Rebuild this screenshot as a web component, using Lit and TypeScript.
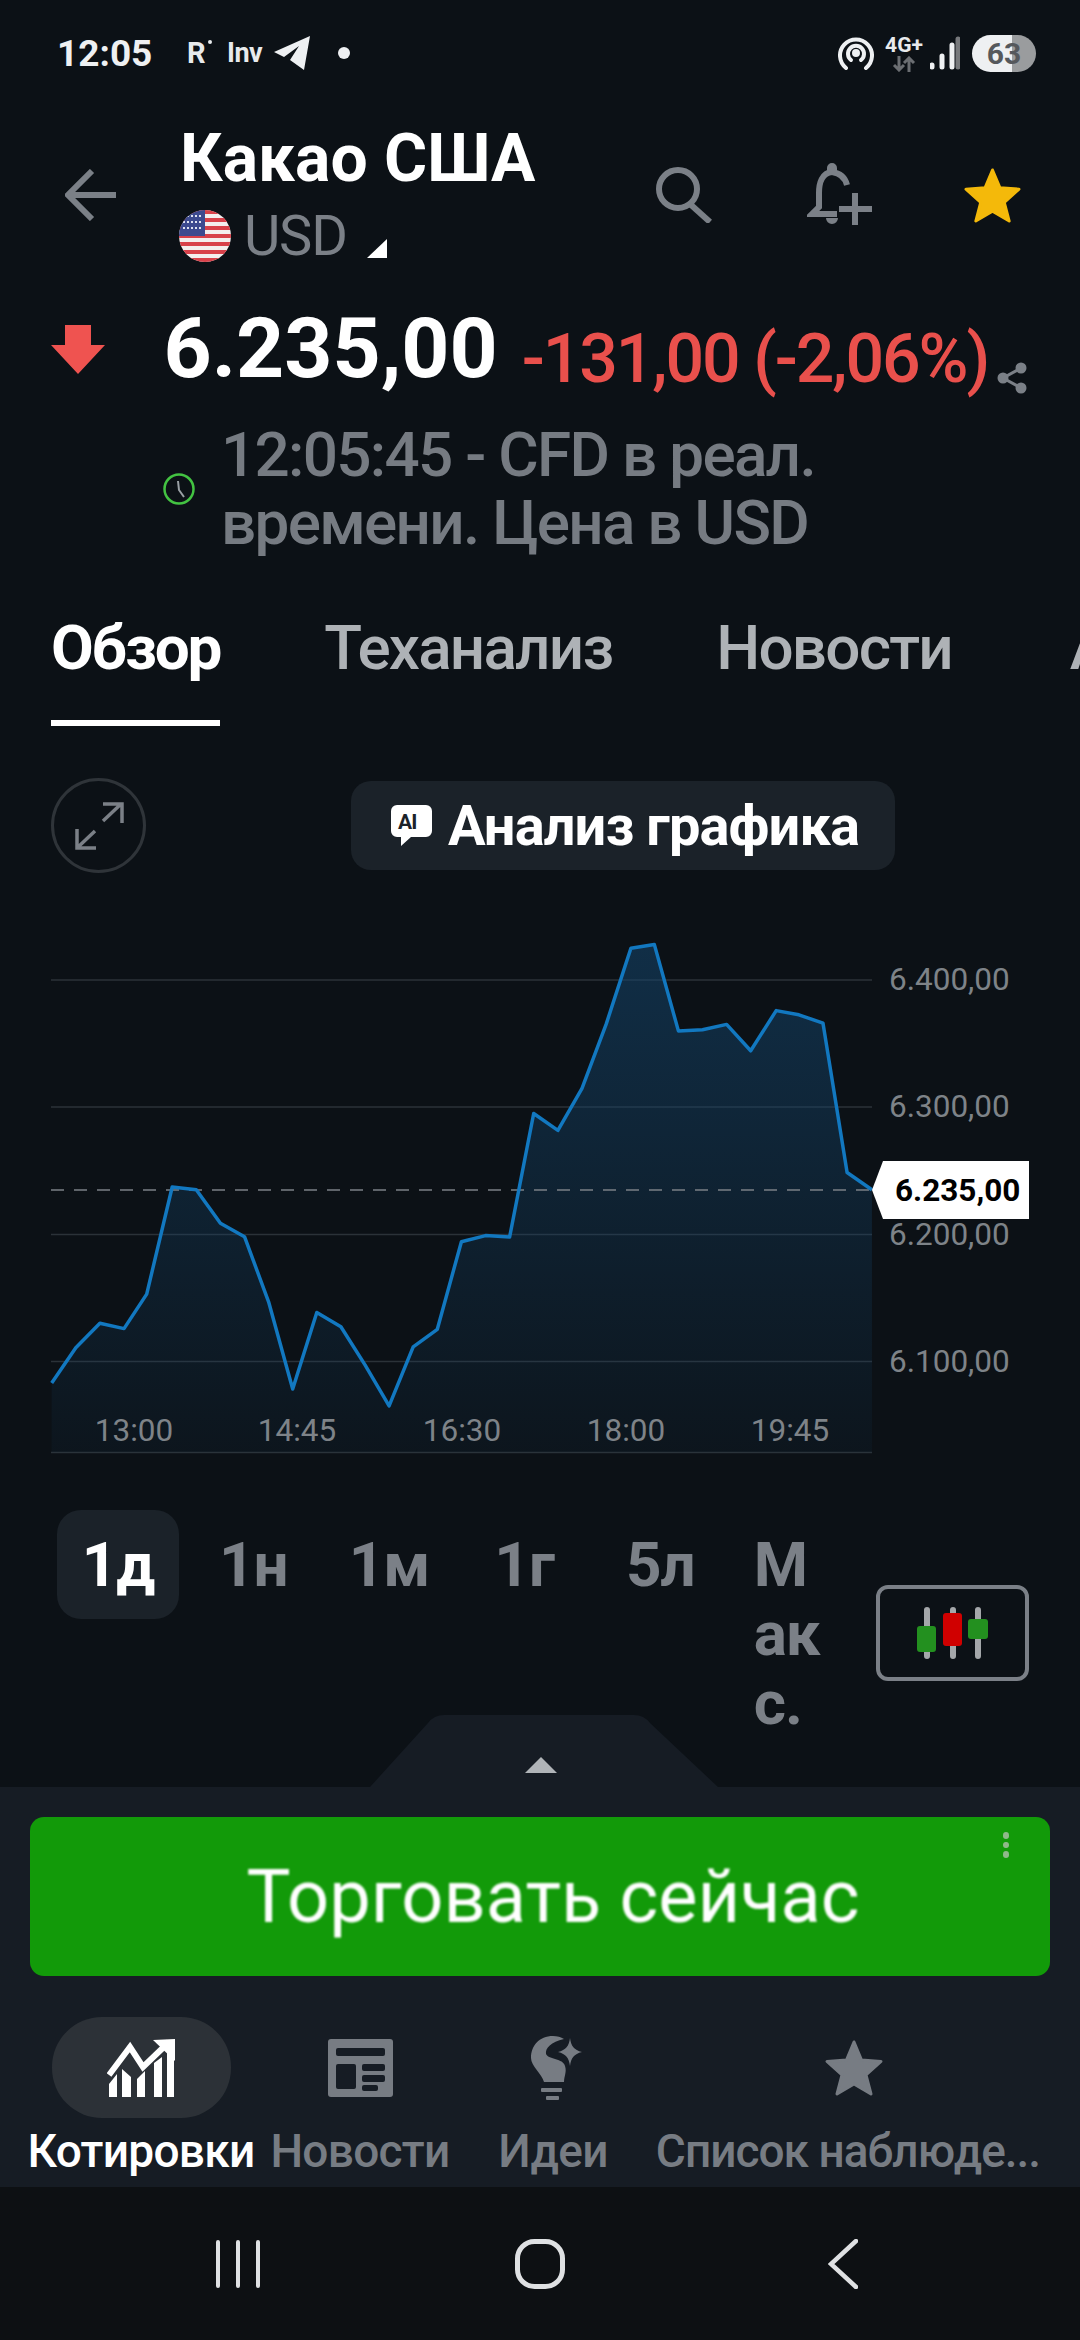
import { LitElement, html, css, svg } from "lit";
import { customElement } from "lit/decorators.js";

const RAW = [[75,1262],[110,1170],[145,1106],[180,1120],[213,1030],[250,750],[285,757],[320,845],[355,880],[390,1050],[425,1278],[460,1078],[495,1115],[530,1215],[565,1322],[600,1168],[635,1122],[670,893],[705,877],[740,881],[775,558],[810,602],[845,492],[880,325],[916,126],[950,116],[985,342],[1020,339],[1055,325],[1090,394],[1127,289],[1160,300],[1195,322],[1230,712],[1266,757]];
const PTS = RAW.map(([x, y]) => [x / 1.452, y / 2.6133 + 900]);
const LINE = PTS.map((p) => p[0].toFixed(1) + "," + p[1].toFixed(1)).join(" ");
const AREA = `51.6,1452.6 ${LINE} 872,1452.6`;
const GRID = [980, 1107, 1234.5, 1361.5, 1452.6];
const YL = [["6.400,00", 990], ["6.300,00", 1117], ["6.200,00", 1245], ["6.100,00", 1372]] as const;
const XL = [["13:00", 134], ["14:45", 297], ["16:30", 462], ["18:00", 626], ["19:45", 790]] as const;

@customElement("app-root")
export class AppRoot extends LitElement {
  static styles = css`
    :host { display: block; width: 1080px; height: 2340px; background: #0c1116; overflow: hidden; font-family: Roboto, "Noto Sans", sans-serif; color: #fff; }
    svg { display: block; flex: none; }
    .status { height: 106px; display: flex; align-items: center; padding: 0 44px 0 57px; box-sizing: border-box; }
    .time { font-size: 37px; font-weight: 700; width: 130px; color: #eef0f2; }
    .rmark { position: relative; font-size: 29px; font-weight: 700; width: 40px; color: #e8eaec; }
    .rmark::after { content: ""; position: absolute; left: 21px; top: 4px; width: 4px; height: 4px; border-radius: 50%; background: #e8eaec; }
    .inv { font-size: 27px; font-weight: 700; width: 46px; color: #e8eaec; letter-spacing: -0.5px; }
    .dot { width: 12px; height: 12px; border-radius: 50%; background: #eef0f2; margin-left: 27px; }
    .sright { margin-left: auto; display: flex; align-items: center; }
    .net { width: 42px; margin: 0 5px 0 9px; display: flex; flex-direction: column; align-items: center; font-size: 21px; font-weight: 700; line-height: 22px; color: #e8eaec; }
    .batt { width: 64px; height: 37px; margin-left: 12px; border-radius: 19px; background: linear-gradient(90deg, #eef0f2 0 63%, #9a9c9e 63% 100%); color: #55585c; font-size: 30px; font-weight: 700; text-align: center; line-height: 37px; }

    .header { display: flex; align-items: center; padding: 16px 57px 0 65px; }
    .hcol { flex: 1; margin-left: 63px; }
    .title { font-size: 66px; font-weight: 700; line-height: 74px; }
    .cur { display: flex; align-items: center; margin-top: 8px; height: 64px; font-size: 56px; line-height: 64px; color: #7b8087; margin-left: -1px; letter-spacing: -1.2px; }
    .cur span { margin-left: 13px; }
    .cur svg.tri { margin: 24px 0 0 20px; }
    .hicons1 { margin-right: 2px; }
    .hicons2 { margin-left: 93px; }
    .hicons3 { margin-left: 90px; }

    .price { display: flex; align-items: flex-start; height: 90px; margin-top: 36px; padding-left: 51px; }
    .arrow { margin-top: 21px; }
    .pval { font-size: 84px; font-weight: 700; line-height: 90px; margin-left: 58.5px; }
    .chg { font-size: 68px; font-weight: 500; line-height: 78px; color: #e9504c; margin: 16px 0 0 24px; white-space: nowrap; letter-spacing: -2.1px; }
    .share { margin: 58px 0 0 8.5px; }

    .meta { display: flex; align-items: center; margin-top: 27px; padding-left: 163px; }
    .mtext { font-size: 62px; font-weight: 500; line-height: 68px; color: #767b82; margin-left: 26px; white-space: nowrap; letter-spacing: -1.7px; }

    .tabs { display: flex; gap: 104px; margin-top: 56px; padding-left: 51px; height: 113px; white-space: nowrap; }
    .tab { font-size: 62px; font-weight: 500; line-height: 70px; color: #aeb2b6; padding-bottom: 37px; flex: none; letter-spacing: -1.8px; }
    .tab.on { color: #fff; font-weight: 700; letter-spacing: -2.1px; border-bottom: 6px solid #fff; }
    .tab.last { margin-left: 14px; }

    .tools { display: flex; align-items: center; margin-top: 52px; padding-left: 51px; height: 95px; }
    .expand { width: 95px; height: 95px; box-sizing: border-box; border: 3px solid #2f3439; border-radius: 50%; display: flex; align-items: center; justify-content: center; }
    .ai { margin-left: 205px; width: 544px; height: 89px; background: #1b2229; border-radius: 20px; display: flex; align-items: center; padding-left: 40px; box-sizing: border-box; font-size: 56px; font-weight: 700; letter-spacing: -0.9px; }
    .ai span { margin-left: 16px; }
    .aitxt { font: 700 21px Roboto, sans-serif; fill: #1b2229; }

    .chart { width: 1080px; height: 627px; }
    .ylab { font: 400 31.5px Roboto, sans-serif; fill: #7e8388; }
    .xlab { font: 400 31.5px Roboto, sans-serif; fill: #7e8388; text-anchor: middle; }
    .tagt { font: 700 31.5px Roboto, sans-serif; fill: #000; }

    .periods { height: 287px; display: flex; align-items: flex-start; padding: 10px 51px 0 57px; box-sizing: border-box; font-size: 62px; font-weight: 700; line-height: 69px; color: #7b8087; letter-spacing: -1px; }
    .per { padding: 20px 0; flex: none; }
    .per.on { width: 122px; background: #1b2229; border-radius: 24px; color: #fff; text-align: center; }
    .p1 { margin-left: 40px; } .p2 { margin-left: 61px; } .p3 { margin-left: 65px; } .p4 { margin-left: 72px; } .p5 { margin-left: 59px; }
    .max { width: 72px; word-break: break-all; }
    .candle { margin: 75px 0 0 auto; width: 153px; height: 96px; box-sizing: border-box; border: 4px solid #7b8087; border-radius: 12px; display: flex; align-items: center; justify-content: center; }

    .drawer { position: relative; height: 400px; background: #161c24; padding-top: 30px; box-sizing: border-box; }
    .handle { position: absolute; left: 370px; top: -72px; }
    .cta { position: relative; margin: 0 30px; height: 159px; background: #129a09; border-radius: 14px; display: flex; align-items: center; justify-content: center; padding-left: 26px; box-sizing: border-box; }
    .cta b { font-size: 74px; font-weight: 400; filter: blur(1px); }
    .dots { position: absolute; right: 41px; top: 15px; display: flex; flex-direction: column; gap: 3px; }
    .dots i { width: 6px; height: 6.5px; background: #8fb98a; border-radius: 50%; }
    .nav { display: grid; grid-template-columns: 242px 196px 190px 400px; padding-left: 20px; margin-top: 41px; }
    .nitem { display: flex; flex-direction: column; align-items: center; white-space: nowrap; }
    .nicon { width: 179px; height: 101px; border-radius: 50px; display: flex; align-items: center; justify-content: center; }
    .nitem.on .nicon { background: #2c3137; }
    .nicon.bulb { padding-left: 7px; box-sizing: border-box; }
    .nicon.fav { padding-left: 12px; box-sizing: border-box; }
    .nlab { margin-top: 8px; font-size: 46px; font-weight: 500; line-height: 50px; color: #777c83; letter-spacing: -0.7px; }
    .nlab.long { letter-spacing: -1px; }
    .nitem.on .nlab { color: #fff; letter-spacing: -0.7px; }

    .sys { height: 153px; background: #0d1013; display: flex; align-items: center; }
    .s1 { margin-left: 216px; } .s2 { margin-left: 255px; } .s3 { margin-left: 263px; }
  `;

  private star(w: number, h: number, c: string) {
    return html`<svg width=${w} height=${h} viewBox="0 0 60 58"><path fill=${c} stroke=${c} stroke-width="3" stroke-linejoin="round" d="M30 3 L37.5 21 L57 22.5 L42 36 L47 55 L30 45 L13 55 L18 36 L3 22.5 L22.5 21 Z"/></svg>`;
  }

  private flag() {
    const stripes = [0, 1, 2, 3, 4, 5, 6].map((i) => svg`<rect x="0" y=${i * 8} width="52" height="4" fill="#d8414a"/>`);
    return html`<svg width="52" height="52" viewBox="0 0 52 52">
      <defs><clipPath id="fc"><circle cx="26" cy="26" r="26"/></clipPath></defs>
      <g clip-path="url(#fc)"><rect width="52" height="52" fill="#f3eeee"/>${stripes}<rect width="26" height="26" fill="#3d4a8f"/>
      <path d="M4 6h18M4 12h18M4 18h18" stroke="#dfe2f0" stroke-width="2" stroke-dasharray="2 2"/></g></svg>`;
  }

  render() {
    return html`
      <div class="status">
        <div class="time">12:05</div>
        <div class="rmark">R</div>
        <div class="inv">Inv</div>
        <svg width="38" height="36" viewBox="0 0 38 36"><path fill="#eef0f2" d="M37 1 L31 35 L17 25 L26 11 L11 22 L1 17 Z"/></svg>
        <div class="dot"></div>
        <div class="sright">
          <svg width="36" height="36" viewBox="0 0 36 36" fill="none" stroke="#eef0f2" stroke-width="4" stroke-linecap="round"><path d="M8 33 A16 16 0 1 1 28 33"/><path d="M13 25 A8 8 0 1 1 23 25"/><circle cx="18" cy="18" r="2" fill="#eef0f2"/></svg>
          <div class="net">4G+<svg width="24" height="16" viewBox="0 0 24 16" fill="none" stroke="#6b6e72" stroke-width="3"><path d="M7 0V14M2 9l5 5 5-5M17 16V2M12 7l5-5 5 5"/></svg></div>
          <svg width="30" height="34" viewBox="0 0 30 34" stroke-width="5" stroke-linecap="round"><path stroke="#eef0f2" d="M3 31v-2M13 31V20M23 31V9" transform="translate(-1 0)"/><path stroke="#77797c" d="M28 31V3"/></svg>
          <div class="batt">63</div>
        </div>
      </div>

      <div class="header">
        <svg width="52" height="52" viewBox="0 0 52 52" fill="none" stroke="#7b8087" stroke-width="6"><path d="M51 26H4M27 2 L3 26 L27 50"/></svg>
        <div class="hcol">
          <div class="title">Какао США</div>
          <div class="cur">${this.flag()}<span>USD</span>
            <svg class="tri" width="20" height="19" viewBox="0 0 20 19"><path fill="#fff" d="M20 0V19H0Z"/></svg></div>
        </div>
        <svg class="hicons1" width="56" height="56" viewBox="0 0 56 56" fill="none" stroke="#7b8087" stroke-width="6"><circle cx="22" cy="22" r="19"/><path d="M34 37 L54 55"/></svg>
        <svg class="hicons2" width="65" height="65" viewBox="0 0 65 65" fill="none" stroke="#7b8087" stroke-width="6"><path d="M25 9C15 10 12 20 12 30V44L5 51H30"/><path d="M25 9C32 10 38 14 40 22"/><path d="M48 30V62M32 46H65"/><path fill="#7b8087" stroke="none" d="M25 0A5 5 0 0 1 30 5V10H20V5A5 5 0 0 1 25 0ZM19 55H31A6 6 0 0 1 19 55Z"/></svg>
        <div class="hicons3">${this.star(61, 57, "#f4b90a")}</div>
      </div>

      <div class="price">
        <svg class="arrow" width="54" height="49" viewBox="0 0 54 49"><path fill="#ef5350" d="M14 0H40V20H54L27 49L0 20H14Z"/></svg>
        <div class="pval">6.235,00</div>
        <div class="chg">-131,00 (-2,06%)</div>
        <svg class="share" width="30" height="32" viewBox="0 0 30 32" fill="#7b8087" stroke="#7b8087" stroke-width="3"><circle cx="24" cy="6" r="4"/><circle cx="6" cy="16" r="4"/><circle cx="24" cy="26" r="4"/><path d="M24 6L6 16L24 26" fill="none"/></svg>
      </div>

      <div class="meta">
        <svg width="32" height="32" viewBox="0 0 32 32" fill="none"><circle cx="16" cy="16" r="14.5" stroke="#43c342" stroke-width="2.5"/><path d="M15 8L16 17L21 24" stroke="#9aa0a5" stroke-width="2"/></svg>
        <div class="mtext">12:05:45 - CFD в реал.<br>времени. Цена в USD</div>
      </div>

      <div class="tabs">
        <div class="tab on">Обзор</div><div class="tab">Теханализ</div><div class="tab">Новости</div><div class="tab last">Аналитика</div>
      </div>

      <div class="tools">
        <div class="expand"><svg width="50" height="48" viewBox="0 0 50 48" fill="none" stroke="#7b8087" stroke-width="3.5"><path d="M29 19L47 2M29 2H48V21M21 29L3 46M3 27V46H22"/></svg></div>
        <div class="ai">
          <svg width="41" height="41" viewBox="0 0 41 41"><path fill="#fff" d="M6 0H35A6 6 0 0 1 41 6V26A6 6 0 0 1 35 32H20L10 41V32H6A6 6 0 0 1 0 26V6A6 6 0 0 1 6 0Z"/><text class="aitxt" x="7" y="24">AI</text></svg>
          <span>Анализ графика</span>
        </div>
      </div>

      <svg class="chart" viewBox="0 873 1080 627">
        <defs><linearGradient id="ag" x1="0" y1="0" x2="0" y2="1"><stop offset="0" stop-color="#14466e" stop-opacity=".55"/><stop offset="1" stop-color="#14466e" stop-opacity=".08"/></linearGradient></defs>
        ${GRID.map((y) => svg`<line x1="51" x2="872" y1=${y} y2=${y} stroke="#2b3238" stroke-width="1.5"/>`)}
        <polygon points=${AREA} fill="url(#ag)"/>
        <line x1="51" x2="872" y1="1190" y2="1190" stroke="#7b8087" stroke-width="1.5" stroke-dasharray="13 10"/>
        <polyline points=${LINE} fill="none" stroke="#1278c0" stroke-width="3.5" stroke-linejoin="round"/>
        ${YL.map(([t, y]) => svg`<text class="ylab" x="889" y=${y}>${t}</text>`)}
        ${XL.map(([t, x]) => svg`<text class="xlab" x=${x} y="1441">${t}</text>`)}
        <polygon points="872,1190 883,1161 1029,1161 1029,1219 883,1219" fill="#fff"/>
        <text class="tagt" x="895" y="1201">6.235,00</text>
      </svg>

      <div class="periods">
        <div class="per on">1д</div>
        <div class="per p1">1н</div>
        <div class="per p2">1м</div>
        <div class="per p3">1г</div>
        <div class="per p4">5л</div>
        <div class="per p5 max">Макс.</div>
        <div class="candle">
          <svg width="71" height="52" viewBox="0 0 71 52">
            <path d="M10 3V49M36 3V49M61 3V49" stroke="#a4a7aa" stroke-width="6" stroke-linecap="round"/>
            <rect x="0" y="19" width="19" height="26" rx="3" fill="#23901f"/><rect x="26" y="6" width="19" height="33" rx="3" fill="#d00000"/><rect x="51" y="12" width="20" height="20" rx="3" fill="#23901f"/>
          </svg>
        </div>
      </div>

      <div class="drawer">
        <svg class="handle" width="348" height="72" viewBox="0 0 348 72"><path fill="#161c24" d="M0 72L58 8Q64 0 74 0H264Q274 0 280 8L348 72Z"/><path fill="#b0b4b8" d="M155 58L171 42L187 58Z"/></svg>
        <div class="cta"><b>Торговать сейчас</b><div class="dots"><i></i><i></i><i></i></div></div>
        <div class="nav">
          <div class="nitem on">
            <div class="nicon"><svg width="68" height="58" viewBox="0 0 68 58"><path fill="#fff" d="M2 58V45L10 35V58ZM15 58V30L24 38V58ZM30 58V40L38 32V58ZM47 58V24L55 18V58ZM60 58V14L67 8V58Z"/><path fill="none" stroke="#fff" stroke-width="6" d="M2 36L23 8L36 28L62 3"/><path fill="#fff" d="M46 1L68 0V22Z"/></svg></div>
            <div class="nlab">Котировки</div>
          </div>
          <div class="nitem">
            <div class="nicon"><svg width="65" height="58" viewBox="0 0 65 58"><rect width="65" height="58" rx="3" fill="#777c83"/><g fill="#161c24"><rect x="8" y="9" width="49" height="8" rx="2"/><rect x="8" y="25" width="20" height="25" rx="2"/><rect x="34" y="25" width="23" height="7" rx="2"/><rect x="34" y="36" width="23" height="7" rx="2"/><rect x="34" y="46" width="16" height="6" rx="2"/></g></svg></div>
            <div class="nlab">Новости</div>
          </div>
          <div class="nitem">
            <div class="nicon bulb"><svg width="52" height="64" viewBox="0 0 52 64"><path fill="#777c83" d="M22 0C8 0 0 10 0 22C0 30 11 38 13 46H33C33 40 36 36 34 30C32 22 18 24 15 18C14 12 20 6 33 3C30 1 26 0 22 0Z"/><path fill="#777c83" d="M39 2C40 10 43 14 51 16C43 18 40 22 39 30C38 22 35 18 27 16C35 14 38 10 39 2Z"/><rect x="10" y="52" width="21" height="4" rx="1" fill="#777c83"/><rect x="15" y="60" width="13" height="4" rx="1" fill="#777c83"/></svg></div>
            <div class="nlab">Идеи</div>
          </div>
          <div class="nitem">
            <div class="nicon fav">${this.star(60, 58, "#777c83")}</div>
            <div class="nlab long">Список наблюде...</div>
          </div>
        </div>
      </div>

      <div class="sys">
        <svg class="s1" width="44" height="48" viewBox="0 0 44 48" stroke="#dfe1e3" stroke-width="4" stroke-linecap="round"><path d="M2 2V46M22 2V46M42 2V46"/></svg>
        <svg class="s2" width="50" height="50" viewBox="0 0 50 50" fill="none" stroke="#dfe1e3" stroke-width="5"><rect x="2.5" y="2.5" width="45" height="45" rx="17"/></svg>
        <svg class="s3" width="30" height="50" viewBox="0 0 30 50" fill="none" stroke="#dfe1e3" stroke-width="4.5" stroke-linecap="round"><path d="M28 2L3 25L28 48"/></svg>
      </div>
    `;
  }
}
